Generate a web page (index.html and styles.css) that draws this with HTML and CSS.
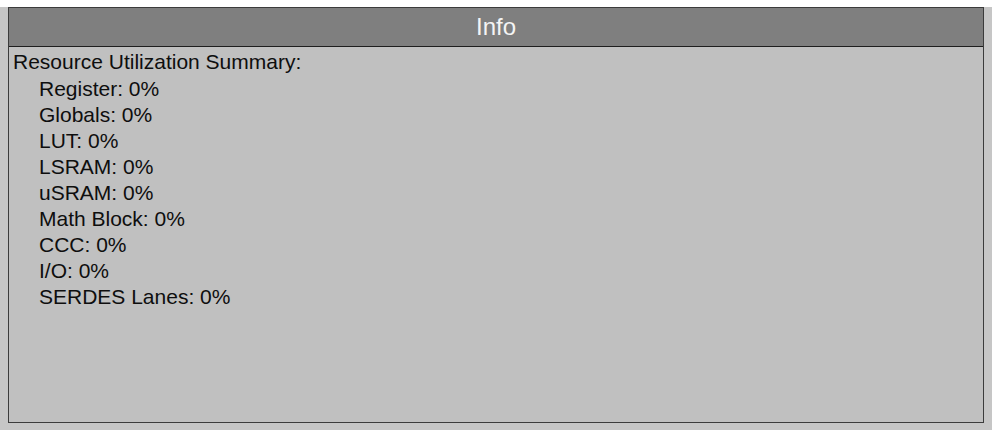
FILE: index.html
```html
<!DOCTYPE html>
<html>
<head>
<meta charset="utf-8">
<link rel="stylesheet" href="styles.css">
</head>
<body>
<div class="page">
  <div class="panel">
    <div class="header">Info</div>
    <div class="content">
      <div class="title">Resource Utilization Summary:</div>
      <ul class="items">
        <li>Register: 0%</li>
        <li>Globals: 0%</li>
        <li>LUT: 0%</li>
        <li>LSRAM: 0%</li>
        <li>uSRAM: 0%</li>
        <li>Math Block: 0%</li>
        <li>CCC: 0%</li>
        <li>I/O: 0%</li>
        <li>SERDES Lanes: 0%</li>
      </ul>
    </div>
  </div>
</div>
</body>
</html>
```
FILE: styles.css
```css
html, body {
  margin: 0;
  padding: 0;
  background: #ffffff;
}
.page {
  margin-top: 7px;
  background: #c6c6c6;
  padding: 0 8px 7px 8px;
  height: 423px;
  box-sizing: border-box;
}
.panel {
  height: 416px;
  box-sizing: border-box;
  border: 1px solid #3c3c3c;
  background: #c0c0c0;
  display: flex;
  flex-direction: column;
  font-family: "Liberation Sans", Arial, sans-serif;
}
.header {
  height: 38px;
  background: #7f7f7f;
  border-bottom: 1px solid #1e1e1e;
  color: #f4f4f4;
  font-size: 24px;
  line-height: 38px;
  text-align: center;
}
.content {
  padding: 2px 4px 0 4px;
  color: #0e0e0e;
  font-size: 21px;
  line-height: 26px;
}
.items {
  list-style: none;
  margin: 1px 0 0 0;
  padding: 0 0 0 26px;
}
```
